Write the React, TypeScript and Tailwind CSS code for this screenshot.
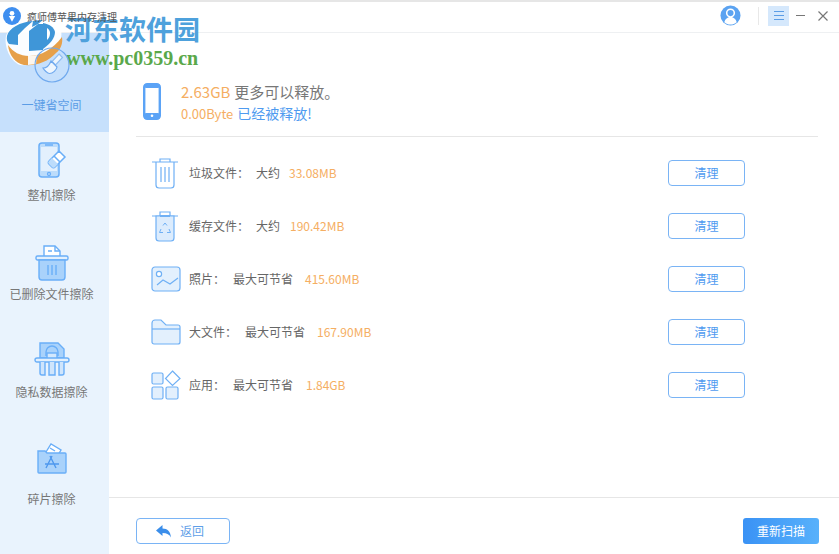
const FONT = "font-['Noto_Sans_CJK_SC','Noto_Sans',sans-serif]";

function IconBroom() {
  return (
    <svg width="36" height="36" viewBox="0 0 36 36" fill="none" stroke="#6fa9ee" strokeWidth="1.2">
      <circle cx="18" cy="18" r="17" />
      <path d="M25 7l3.500 3.500-7 7.500-3.500-3.500z" fill="#eef6fe" stroke="#8fbdf2" />
      <path d="M17 14l6 6c-.5 3-4 6.500-7.500 6.500-2 0-5.500-3.500-6.500-5.500 3.500 0 6.500-3 8-7z" fill="#eef6fe" />
    </svg>
  );
}
function IconPhoneErase() {
  return (
    <svg width="32" height="38" viewBox="0 0 32 38" fill="none" stroke="#69aef8" strokeWidth="1.5">
      <rect x="3" y="1" width="20" height="34" rx="3" fill="#bcdcfb" />
      <rect x="5" y="5" width="16" height="24" fill="#e3f0fd" stroke="none" />
      <circle cx="13" cy="32" r="1.400" fill="#fff" />
      <path d="M9 3h8" />
      <path d="M13 19l10-10 6 6-10 10a2 2 0 0 1-3 0l-3-3a2 2 0 0 1 0-3z" fill="#fff" />
      <path d="M18 14l6 6" />
      <path d="M13 19l3-3 6 6-3 3a2 2 0 0 1-3 0l-3-3a2 2 0 0 1 0-3z" fill="#bcdcfb" stroke="none" />
    </svg>
  );
}
function IconBinDoc() {
  return (
    <svg width="34" height="38" viewBox="0 0 34 38" fill="none" stroke="#69aef8" strokeWidth="1.400">
      <path d="M9 12V2h11l5 5v5" fill="#fff" />
      <path d="M20 2v5h5M13 7h4" />
      <rect x="1" y="12" width="32" height="4" rx="1.500" fill="#e3f0fd" />
      <path d="M4 16h26v17a3 3 0 0 1-3 3H7a3 3 0 0 1-3-3z" fill="#a9d2fb" />
      <path d="M13 21v10M17 21v10M21 21v10" />
    </svg>
  );
}
function IconLockSim() {
  return (
    <svg width="36" height="36" viewBox="0 0 36 36" fill="none" stroke="#69aef8" strokeWidth="1.400">
      <path d="M6 2h18l6 6v9H6z" fill="#a9d2fb" />
      <path d="M12 15v-4a6 6 0 0 1 12 0v4" />
      <rect x="13" y="12" width="10" height="6" fill="#d3e8fd" />
      <rect x="1" y="17" width="34" height="4" rx="2" fill="#e3f0fd" />
      <path d="M6 21v11a2 2 0 0 0 2 2h3V21M15 21v13h6V21M25 21v13h3a2 2 0 0 0 2-2V21" fill="#cfe5fc" />
    </svg>
  );
}
function IconFolderApp() {
  return (
    <svg width="30" height="34" viewBox="0 0 30 34" fill="none" stroke="#69aef8" strokeWidth="1.400">
      <path d="M9 12l5-8 10 6-3 5" fill="#fff" />
      <path d="M13 8l5 3" />
      <path d="M1 11h7l2 2h18a1 1 0 0 1 1 1v18a1 1 0 0 1-1 1H2a1 1 0 0 1-1-1z" fill="#a9d2fb" />
      <path d="M15 16l-6 12M13 16l6 12M8 24h14" stroke="#4e98ee" />
    </svg>
  );
}
function IconPhone() {
  return (
    <svg width="18" height="37" viewBox="0 0 18 37" fill="none">
      <rect x="1.200" y="1.200" width="15.600" height="34.600" rx="3" fill="#fff" stroke="#5ba3f6" strokeWidth="2.400" />
      <rect x="1" y="30" width="16" height="6" rx="2" fill="#5ba3f6" />
      <rect x="1" y="1" width="16" height="4" rx="2" fill="#5ba3f6" />
      <circle cx="9" cy="32.800" r="1.300" fill="#fff" />
    </svg>
  );
}
function IconTrash() {
  return (
    <svg width="28" height="32" viewBox="0 0 28 32" fill="none" stroke="#6fb0f5" strokeWidth="1.200">
      <path d="M1 5h26M9 5V2h10v3" />
      <path d="M5 5v23a3 3 0 0 0 3 3h12a3 3 0 0 0 3-3V5" />
      <path d="M10 10v15M14 10v15M18 10v15" />
    </svg>
  );
}
function IconTrashRecycle() {
  return (
    <svg width="28" height="32" viewBox="0 0 28 32" fill="none" stroke="#6fb0f5" strokeWidth="1.200">
      <path d="M1 6h26M9 6V2h10v4" />
      <path d="M5 6v22a3 3 0 0 0 3 3h12a3 3 0 0 0 3-3V6z" fill="#dcecfd" />
      <path d="M9 6h10" strokeWidth="2" />
      <path d="M12 15.500l2-2.500 2 2.500M18 19l1.500 3.500H16M12 22.500H8.500L10 19" strokeWidth="1" />
    </svg>
  );
}
function IconImage() {
  return (
    <svg width="30" height="26" viewBox="0 0 30 26" fill="none" stroke="#6fb0f5" strokeWidth="1.200">
      <rect x="1" y="1" width="28" height="24" rx="3" fill="#e3f0fd" />
      <circle cx="8" cy="8" r="2.600" fill="#fff" />
      <path d="M6 19l6-5 7 4 8-6" />
    </svg>
  );
}
function IconFolder() {
  return (
    <svg width="30" height="26" viewBox="0 0 30 26" fill="none" stroke="#6fb0f5" strokeWidth="1.200">
      <path d="M1 4a3 3 0 0 1 3-3h6l5 5h12a2 2 0 0 1 2 2v15a2 2 0 0 1-2 2H3a2 2 0 0 1-2-2z" fill="#e3f0fd" />
      <path d="M1 10h28" />
    </svg>
  );
}
function IconApps() {
  return (
    <svg width="30" height="30" viewBox="0 0 30 30" fill="none" stroke="#6fb0f5" strokeWidth="1.200">
      <rect x="1" y="3" width="11" height="11" rx="1.500" fill="#e3f0fd" />
      <rect x="1" y="17" width="11" height="12" rx="1.500" fill="#e3f0fd" />
      <rect x="15" y="17" width="12" height="12" rx="1.500" fill="#e3f0fd" />
      <path d="M21.500 1L29 8.500 21.500 15.500 14.500 8.500z" fill="#fff" />
    </svg>
  );
}

const nav = [
  { label: "整机擦除", icon: <IconPhoneErase />, h: "h-[97px]", pt: "pt-[10px]", gap: "gap-[7px]" },
  { label: "已删除文件擦除", icon: <IconBinDoc />, h: "h-[98px]", pt: "pt-[15px]", gap: "gap-[4px]" },
  { label: "隐私数据擦除", icon: <IconLockSim />, h: "h-[100px]", pt: "pt-[14px]", gap: "gap-[7px]" },
  { label: "碎片擦除", icon: <IconFolderApp />, h: "h-[100px]", pt: "pt-[13px]", gap: "gap-[17px]" },
];

const rows = [
  { icon: <IconTrash />, name: "垃圾文件：", hint: "大约", size: "33.08MB", nameW: "w-[67px]", hintW: "w-[33px]" },
  { icon: <IconTrashRecycle />, name: "缓存文件：", hint: "大约", size: "190.42MB", nameW: "w-[67px]", hintW: "w-[34px]" },
  { icon: <IconImage />, name: "照片：", hint: "最大可节省", size: "415.60MB", nameW: "w-[44px]", hintW: "w-[72px]" },
  { icon: <IconFolder />, name: "大文件：", hint: "最大可节省", size: "167.90MB", nameW: "w-[56px]", hintW: "w-[72px]" },
  { icon: <IconApps />, name: "应用：", hint: "最大可节省", size: "1.84GB", nameW: "w-[44px]", hintW: "w-[73px]" },
];

function Logo() {
  return (
    <svg width="80" height="90" viewBox="0 0 80 90">
      <path d="M6 36C10 24 34 14 50 18c9 2 13 11 11 20-4 14-22 29-41 27C10 61 4 47 6 36z" fill="#fff" opacity="0.92" />
      <path d="M7 36c2-8 13-14 26-15L25 28l-7 7v10l-9-1c-2-2-2.500-5-2-8z" fill="#3f96d8" />
      <path d="M29 31l9-7h5v26l-14 1z" fill="#3f96d8" />
      <path d="M33 21c4-1 8-1 10-1l-5 4-6 3z" fill="#3f96d8" />
      <path d="M43 23c6 1 11 4 12 9 0 6-5 12-12 17z" fill="#3f96d8" />
      <path d="M47 28c2 1 3 3 3 5 0 3-1 5-3 7z" fill="#fff" />
      <path d="M8 45c5 7 12 11 21 11 12 0 24-7 33-19 1 6-1 12-6 16-8 9-20 13-32 12-9-2-15-10-16-20z" fill="#e6a04a" />
      <path d="M28 56c3 0 6 0 9-1l-1 9-8 1z" fill="#fff" opacity="0.9" />
    </svg>
  );
}

export default function App() {
  return (
    <div className={`relative w-[839px] h-[554px] bg-white overflow-hidden flex flex-col ${FONT}`}>
      {/* title bar */}
      <header className="h-[33px] shrink-0 flex items-center border-t-2 border-b border-t-[#e6e6e6] border-b-[#eef0f2] bg-white">
        <div className="relative z-10 w-[27px] pl-[3px] pb-[3px] shrink-0">
          <svg width="18" height="18" viewBox="0 0 17 17">
            <circle cx="8.500" cy="8.500" r="8.500" fill="#3f8ff0" />
            <circle cx="8.500" cy="6" r="2.200" fill="#fff" />
            <path d="M8.500 14L5.500 8.500h6z" fill="#fff" />
          </svg>
        </div>
        <span className="relative z-10 text-[10px] leading-none text-[#555] whitespace-nowrap">疯师傅苹果内存清理</span>
        <div className="ml-auto flex items-center pb-[3px]">
          <svg width="21" height="21" viewBox="0 0 22 22">
            <circle cx="11" cy="11" r="10.500" fill="#5ba3f1" />
            <circle cx="11" cy="8.500" r="4" fill="none" stroke="#fff" strokeWidth="1.600" />
            <path d="M4.500 18c1-4 4-5.500 6.500-5.500s5.500 1.500 6.500 5.500c-2 1.600-4 2.500-6.500 2.500s-4.500-.9-6.500-2.500z" fill="#fff" />
          </svg>
          <div className="w-px h-[18px] bg-[#e8e8e8] ml-[17px] mr-[9px]" />
          <div className="w-[21px] h-[20px] bg-[#d5e8fc] flex flex-col items-center justify-center gap-[3px]">
            <span className="block w-[10px] h-px bg-[#5b9de6]" />
            <span className="block w-[10px] h-px bg-[#5b9de6]" />
            <span className="block w-[10px] h-px bg-[#5b9de6]" />
          </div>
          <span className="block w-[9px] h-[1.500px] bg-[#777] ml-[7px]" />
          <svg className="ml-[13px] mr-[11px]" width="10" height="10" viewBox="0 0 10 10" stroke="#777" strokeWidth="1.200">
            <path d="M.5.500l9 9M9.500.500l-9 9" />
          </svg>
        </div>
      </header>

      <div className="flex flex-1 min-h-0">
        {/* sidebar */}
        <aside className="w-[109px] shrink-0 bg-[#e9f3fd] flex flex-col">
          <div className="h-[99px] bg-[#c6e0fc] pr-[6px] flex flex-col items-center justify-end pb-[19px] gap-[14px]">
            <div className="relative z-10"><IconBroom /></div>
            <span className="text-[12px] leading-[16px] text-[#5b9de6]">一键省空间</span>
          </div>
          {nav.map((n) => (
            <div key={n.label} className={`${n.h} ${n.pt} ${n.gap} pr-[6px] flex flex-col items-center`}>
              {n.icon}
              <span className="text-[12px] leading-[16px] text-[#777] whitespace-nowrap">{n.label}</span>
            </div>
          ))}
        </aside>

        {/* main */}
        <main className="flex-1 min-w-0 flex flex-col">
          <div className="flex-1 min-h-0 pl-[27px] pr-[21px]">
            <section className="h-[103px] pt-[49px] flex items-start gap-[20px] pl-[7px]">
              <div className="pt-[1px]"><IconPhone /></div>
              <div className="flex flex-col">
                <div className="text-[15px] leading-[20px] text-[#777]">
                  <span className="text-[#f5ae62] mr-[4px]">2.63GB</span>更多可以释放。
                </div>
                <div className="text-[14px] leading-[20px] mt-[1px] text-[#4f9bf0]">
                  <span className="text-[13px] text-[#f5ae62] mr-[4px]">0.00Byte</span>已经被释放!
                </div>
              </div>
            </section>
            <div className="h-px bg-[#e6e6e6]" />
            <ul className="pt-[9px] flex flex-col">
              {rows.map((r) => (
                <li key={r.name} className="h-[53px] flex items-center">
                  <div className="w-[53px] shrink-0 flex justify-start pl-[15px]">{r.icon}</div>
                  <span className={`${r.nameW} shrink-0 text-[12px] text-[#666] whitespace-nowrap`}>{r.name}</span>
                  <span className={`${r.hintW} shrink-0 text-[12px] text-[#666] whitespace-nowrap`}>{r.hint}</span>
                  <span className="text-[12px] text-[#f5ae62]">{r.size}</span>
                  <button className="ml-auto mr-[73px] w-[77px] h-[26px] rounded-[4px] border border-[#7ab4f5] text-[12px] text-[#4f9bf0] bg-white">
                    清理
                  </button>
                </li>
              ))}
            </ul>
          </div>
          <footer className="h-[57px] shrink-0 border-t border-[#e6e6e6] flex items-center justify-between pl-[27px] pr-[20px] pt-[10px]">
            <button className="w-[94px] h-[26px] rounded-[4px] border border-[#7ab4f5] pr-[6px] flex items-center justify-center gap-[9px] text-[12px] text-[#5f9fe8] bg-white">
              <svg width="15" height="13" viewBox="0 0 15 13" fill="#3b8eea">
                <path d="M0 5.500L6.500 0v3.500c5 0 8 3 8.500 9-1.500-3-4-4.500-8.500-4.500V11z" />
              </svg>
              返回
            </button>
            <button className="w-[76px] h-[26px] rounded-[3px] text-[12px] text-white bg-gradient-to-r from-[#3a92f5] to-[#58b1fb]">
              重新扫描
            </button>
          </footer>
        </main>
      </div>

      {/* site watermark over the title bar */}
      <div className="absolute left-0 top-0"><Logo /></div>
      <div className="absolute left-[65px] top-[11px] text-[27px] leading-[36px] font-bold text-[#4ea1dc] whitespace-nowrap">河东软件园</div>
      <div className="absolute left-[66px] top-[48px] text-[20px] leading-[20px] font-bold text-[#5aa84a] whitespace-nowrap font-['Liberation_Serif',serif]">www.pc0359.cn</div>
    </div>
  );
}
